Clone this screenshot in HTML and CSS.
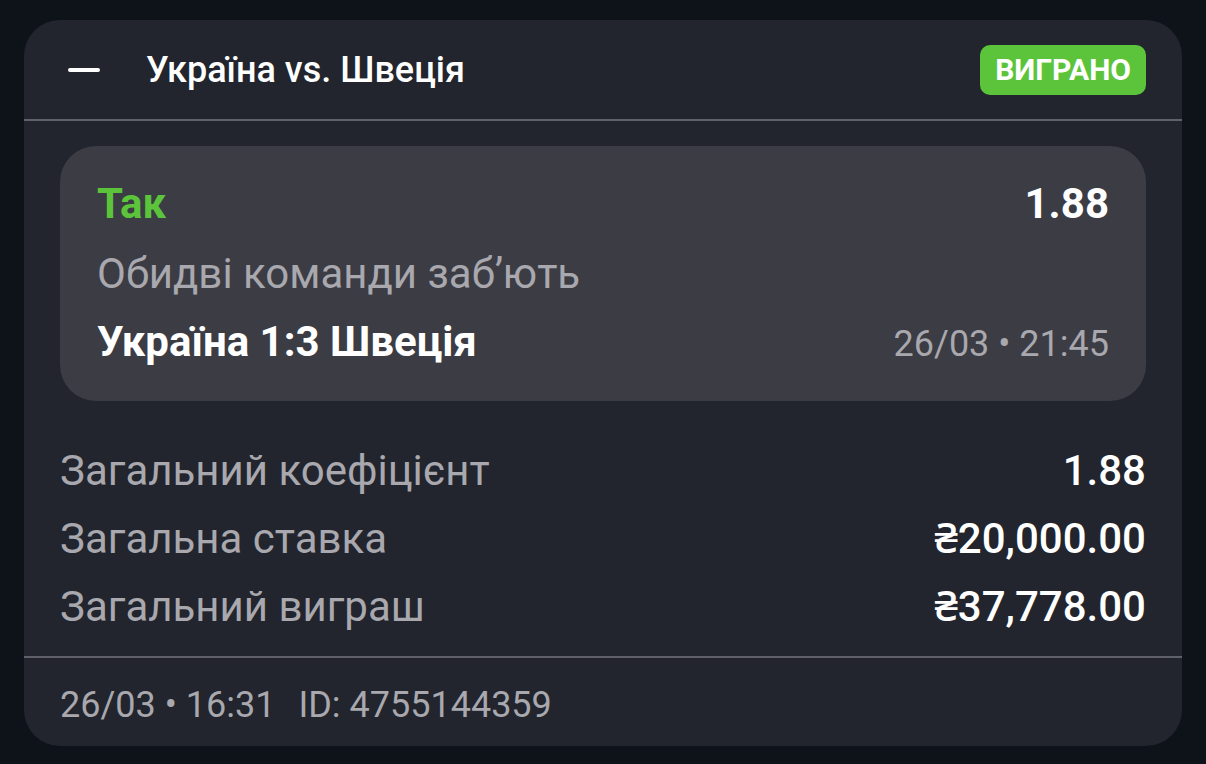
FILE: index.html
```html
<!DOCTYPE html>
<html>
	<head>
		<meta charset="utf-8">
		<link rel="stylesheet" href="styles.css">
	</head>
	<body>
		<div class="card">
			<div class="head">
				<span class="collapse"></span>
				<span class="title">Україна vs. Швеція</span>
				<span class="badge">ВИГРАНО</span>
			</div>

			<div class="pick">
				<div class="row">
					<span class="pick-name">Так</span>
					<span class="pick-odd">1.88</span>
				</div>
				<div class="market">Обидві команди заб’ють</div>
				<div class="row score-row">
					<span class="score">Україна 1:3 Швеція</span>
					<span class="date">26/03 • 21:45</span>
				</div>
			</div>

			<div class="totals">
				<div class="row"><span class="label">Загальний коефіцієнт</span><span class="value">1.88</span></div>
				<div class="row"><span class="label">Загальна ставка</span><span class="value">₴20,000.00</span></div>
				<div class="row"><span class="label">Загальний виграш</span><span class="value">₴37,778.00</span></div>
			</div>

			<div class="foot">
				<span>26/03 • 16:31</span>
				<span>ID: 4755144359</span>
			</div>
		</div>
	</body>
</html>
```

FILE: styles.css
```css
html, body {
    margin: 0;
    background: #0e131a;
    font-family: Roboto, "Noto Sans", sans-serif;
}

body {
    padding: 20px 24px 18px 24px;
}

.card {
    background: #22252d;
    border-radius: 36px;
    overflow: hidden;
}

.head {
    display: flex;
    align-items: center;
    height: 99px;
    padding: 0 36px 0 44px;
    border-bottom: 2px solid #606168;
}

.collapse {
    width: 32px;
    height: 4px;
    background: #fff;
    border-radius: 2px;
    margin-right: 46px;
}

.title {
    flex: 1;
    color: #fff;
    font-size: 36px;
    font-weight: 500;
}

.badge {
    background: #5bc43b;
    color: #fff;
    font-size: 30px;
    font-weight: 700;
    padding: 0 15px;
    height: 50px;
    line-height: 50px;
    border-radius: 10px;
}

.row {
    display: flex;
    justify-content: space-between;
    align-items: baseline;
    font-size: 42px;
    line-height: 50px;
}

.pick {
    margin: 25px 36px 0 36px;
    background: #3c3c44;
    border-radius: 36px;
    padding: 33px 37px 34px 37px;
}

.pick-name {
    color: #5bc43b;
    font-weight: 700;
}

.pick-odd {
    color: #fff;
    font-weight: 700;
}

.market {
    color: #a8a8ae;
    font-size: 42px;
    line-height: 50px;
    margin-top: 20px;
}

.score-row {
    margin-top: 18px;
}

.score {
    color: #fff;
    font-weight: 700;
}

.date {
    color: #a8a8ae;
    font-size: 36px;
    line-height: 42px;
}

.totals {
    padding: 45px 36px 24px 36px;
    display: flex;
    flex-direction: column;
    gap: 18px;
    border-bottom: 2px solid #606168;
}

.label {
    color: #a8a8ae;
}

.value {
    color: #fff;
    font-weight: 500;
}

.foot {
    padding: 25px 36px 19px 36px;
    color: #a8a8ae;
    font-size: 36px;
    line-height: 44px;
    display: flex;
    gap: 23px;
}
```
